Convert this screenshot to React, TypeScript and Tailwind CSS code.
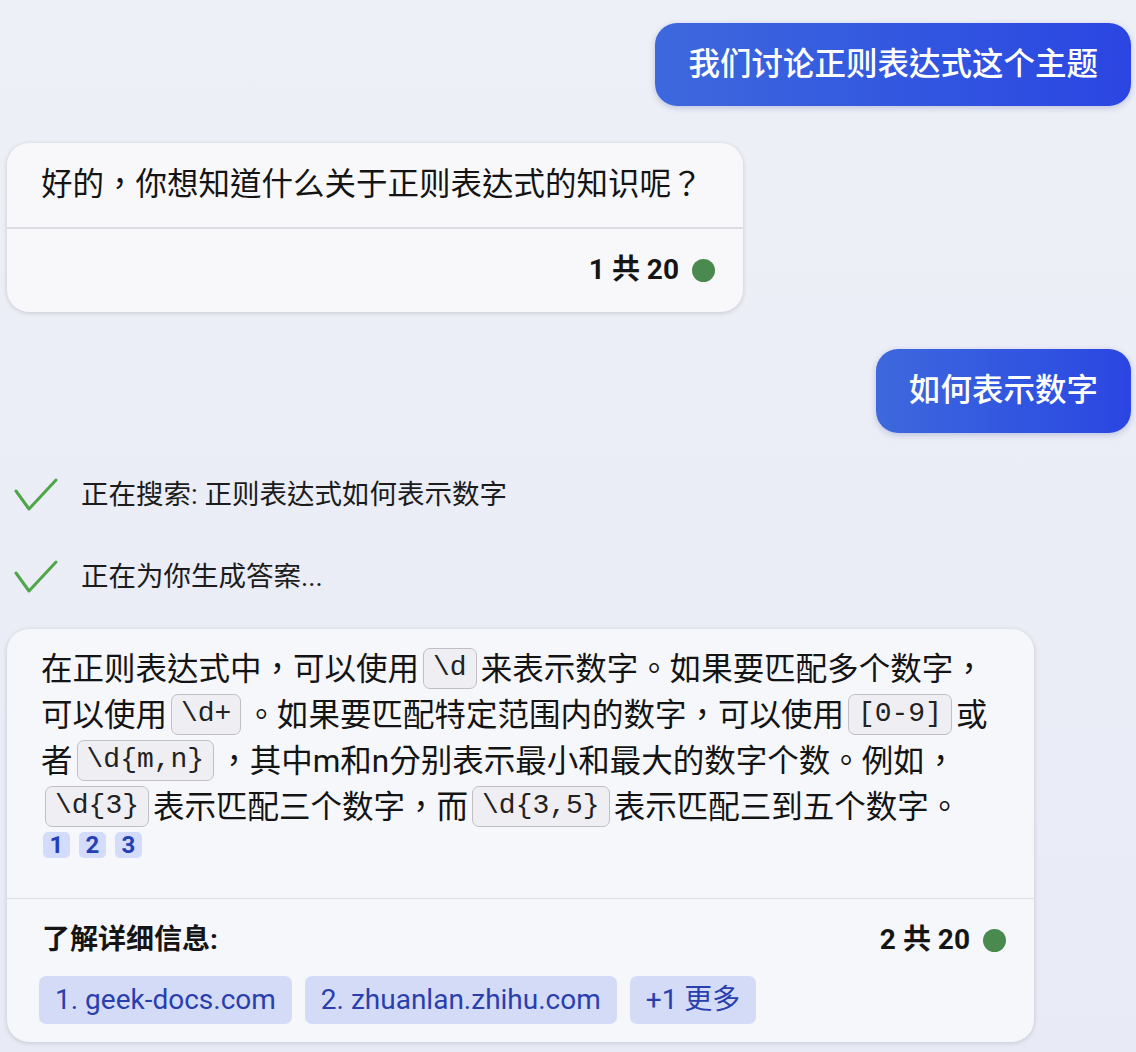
import React from "react";

const CJK = '"Roboto", "Noto Sans CJK TC", "Noto Sans CJK SC", sans-serif';

function Code({ children }: { children: React.ReactNode }) {
  return (
    <span
      className="inline-block align-middle h-[41px] leading-[38px] px-[9px] mx-[4px] border-[1.5px] border-[#bfbfc5] bg-[#efeff3] rounded-[7px] text-[28px] text-[#222] relative top-[-3px]"
      style={{ fontFamily: '"Liberation Mono", monospace' }}
    >
      {children}
    </span>
  );
}

function Check() {
  return (
    <svg width="44" height="34" viewBox="0 0 44 34" fill="none">
      <path d="M2 13 L15 31 L42 2" stroke="#4fa64a" strokeWidth="3" strokeLinecap="round" strokeLinejoin="round" />
    </svg>
  );
}

function Counter({ n }: { n: number }) {
  return (
    <div className="flex items-center gap-[13px]">
      <span className="text-[28px] font-bold text-[#151515]">{n} 共 20</span>
      <span className="w-[23px] h-[23px] rounded-full bg-[#4a8a4e]" />
    </div>
  );
}

export default function App() {
  return (
    <div
      className="w-[1136px] h-[1052px] overflow-hidden bg-gradient-to-b from-[#eef0f7] to-[#e8ebf6] flex flex-col text-[#141414]"
      style={{ fontFamily: CJK }}
    >
      {/* user bubble 1 */}
      <div className="self-end mr-[5px] mt-[23px] h-[83px] px-[33px] flex items-center rounded-[22px] bg-gradient-to-r from-[#3e68dd] to-[#2b45e2] shadow-[0_2px_6px_rgba(40,60,150,0.25)]">
        <span className="text-white text-[31.5px] leading-none font-medium">我们讨论正则表达式这个主题</span>
      </div>

      {/* bot bubble 1 */}
      <div className="ml-[7px] mt-[37px] w-[736px] rounded-[22px] bg-[#f8f8fb] shadow-[0_1px_5px_rgba(0,0,0,0.16)] flex flex-col">
        <div className="pt-[21px] pb-[21px] pl-[34px] text-[31.5px] leading-[42px]">
          好的，你想知道什么关于正则表达式的知识呢？
        </div>
        <div className="h-[1.5px] bg-[#dcdde2]" />
        <div className="h-[83px] flex items-center justify-end pr-[28px]">
          <Counter n={1} />
        </div>
      </div>

      {/* user bubble 2 */}
      <div className="self-end mr-[5px] mt-[37px] h-[84px] px-[33px] flex items-center rounded-[22px] bg-gradient-to-r from-[#3e68dd] to-[#2b45e2] shadow-[0_2px_6px_rgba(40,60,150,0.25)]">
        <span className="text-white text-[31.5px] leading-none font-medium">如何表示数字</span>
      </div>

      {/* status rows */}
      <div className="mt-[40px] ml-[14px] flex items-center h-[44px] gap-[23px]">
        <Check />
        <span className="text-[27.5px] text-[#1c1c1c]">正在搜索: 正则表达式如何表示数字</span>
      </div>
      <div className="mt-[38px] ml-[14px] flex items-center h-[44px] gap-[23px]">
        <Check />
        <span className="text-[27.5px] text-[#1c1c1c]">正在为你生成答案...</span>
      </div>

      {/* bot bubble 2 */}
      <div className="ml-[7px] mt-[30px] w-[1027px] rounded-[22px] bg-[#f6f7fb] shadow-[0_1px_5px_rgba(0,0,0,0.16)] flex flex-col">
        <div className="pt-[18px] pl-[34px] pr-[20px] pb-[40px]">
          <div className="text-[31.5px] leading-[46px] whitespace-nowrap">
            在正则表达式中，可以使用<Code>\d</Code>来表示数字。如果要匹配多个数字，
            <br />
            可以使用<Code>\d+</Code>。如果要匹配特定范围内的数字，可以使用<Code>[0-9]</Code>或
            <br />
            者<Code>\d{"{m,n}"}</Code>，其中m和n分别表示最小和最大的数字个数。例如，
            <br />
            <Code>\d{"{3}"}</Code>表示匹配三个数字，而<Code>\d{"{3,5}"}</Code>表示匹配三到五个数字。
          </div>
          <div className="flex gap-[9px] mt-[1px] ml-[2px]">
            {[1, 2, 3].map((n) => (
              <span
                key={n}
                className="w-[27px] h-[26px] rounded-[5px] bg-[#d3dcfa] text-[#2440b8] font-bold text-[24px] flex items-center justify-center"
              >
                {n}
              </span>
            ))}
          </div>
        </div>
        <div className="h-[1.5px] bg-[#dcdde2]" />
        <div className="pt-[25px] pb-[18px] pl-[32px] pr-[28px] flex flex-col">
          <div className="flex items-center justify-between h-[32px]">
            <span className="text-[28px] font-bold text-[#151515] ml-[3px]">了解详细信息:</span>
            <Counter n={2} />
          </div>
          <div className="flex gap-[13px] mt-[20px]">
            {["1. geek-docs.com", "2. zhuanlan.zhihu.com", "+1 更多"].map((t) => (
              <span
                key={t}
                className="h-[48px] px-[16px] rounded-[7px] bg-[#d4dbf6] text-[#2a3fae] text-[28px] flex items-center"
              >
                {t}
              </span>
            ))}
          </div>
        </div>
      </div>
    </div>
  );
}
